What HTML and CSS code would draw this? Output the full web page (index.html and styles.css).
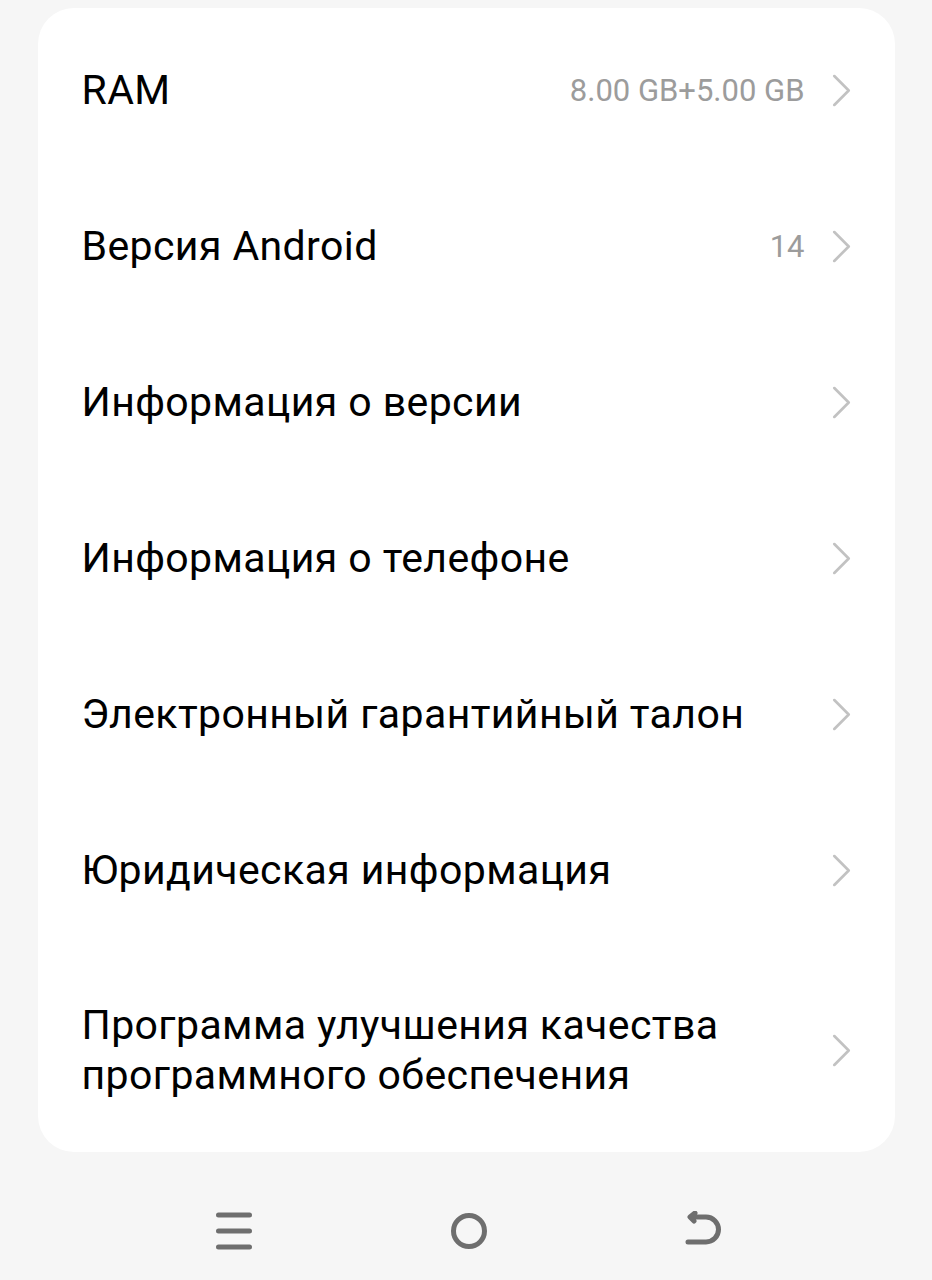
FILE: index.html
```html
<!DOCTYPE html>
<html lang="ru">
<head>
<meta charset="utf-8">
<link rel="stylesheet" href="styles.css">
</head>
<body>
<div class="screen">
  <div class="card">
    <div class="row">
      <span class="title">RAM</span>
      <span class="value">8.00 GB+5.00 GB</span>
      <svg class="chev" viewBox="0 0 20 32"><path d="M3 2 L17 16 L3 30"/></svg>
    </div>
    <div class="row">
      <span class="title">Версия Android</span>
      <span class="value">14</span>
      <svg class="chev" viewBox="0 0 20 32"><path d="M3 2 L17 16 L3 30"/></svg>
    </div>
    <div class="row">
      <span class="title">Информация о версии</span>
      <svg class="chev" viewBox="0 0 20 32"><path d="M3 2 L17 16 L3 30"/></svg>
    </div>
    <div class="row">
      <span class="title">Информация о телефоне</span>
      <svg class="chev" viewBox="0 0 20 32"><path d="M3 2 L17 16 L3 30"/></svg>
    </div>
    <div class="row">
      <span class="title">Электронный гарантийный талон</span>
      <svg class="chev" viewBox="0 0 20 32"><path d="M3 2 L17 16 L3 30"/></svg>
    </div>
    <div class="row">
      <span class="title">Юридическая информация</span>
      <svg class="chev" viewBox="0 0 20 32"><path d="M3 2 L17 16 L3 30"/></svg>
    </div>
    <div class="row row-tall">
      <span class="title">Программа улучшения качества<br>программного обеспечения</span>
      <svg class="chev" viewBox="0 0 20 32"><path d="M3 2 L17 16 L3 30"/></svg>
    </div>
  </div>
  <div class="navbar">
    <svg class="nav-icon" viewBox="0 0 40 40"><path d="M4.5 4 H35.5 M4.5 20 H35.5 M4.5 36 H35.5"/></svg>
    <svg class="nav-icon" viewBox="0 0 40 40"><circle cx="20" cy="20" r="15.5"/></svg>
    <svg class="nav-icon" viewBox="0 0 40 40"><path d="M7 6 H22 A12.5 12.5 0 0 1 22 31 H4 M11 2 L6 6 L10 10"/></svg>
  </div>
</div>
</body>
</html>
```

FILE: styles.css
```css
html, body {
  margin: 0;
  padding: 0;
  background: #f6f6f6;
}

.screen {
  width: 932px;
  height: 1280px;
  padding-top: 8px;
  box-sizing: border-box;
  display: flex;
  flex-direction: column;
  align-items: center;
  font-family: Roboto, "Noto Sans", sans-serif;
}

.card {
  width: 857px;
  background: #ffffff;
  border-radius: 36px;
  padding-top: 4px;
  box-sizing: border-box;
}

.row {
  height: 156px;
  display: flex;
  align-items: center;
  padding: 0 43px 0 44px;
}

.row-tall {
  height: 204px;
}

.title {
  flex: 1;
  font-size: 41px;
  line-height: 50px;
  letter-spacing: 0.4px;
  color: #000000;
}

.value {
  font-size: 31px;
  color: #9c9c9c;
  margin-right: 26px;
}

.chev {
  width: 21px;
  height: 33px;
  flex: none;
}

.chev path {
  fill: none;
  stroke: #c2c2c2;
  stroke-width: 2.6;
  stroke-linecap: round;
  stroke-linejoin: round;
}

.navbar {
  flex: 1;
  display: flex;
  justify-content: center;
  align-items: center;
  gap: 195px;
  padding-left: 5px;
  padding-top: 30px;
}

.nav-icon {
  width: 40px;
  height: 40px;
}

.nav-icon path,
.nav-icon circle {
  fill: none;
  stroke: #6e6e6e;
  stroke-width: 5;
  stroke-linecap: round;
  stroke-linejoin: round;
}
```
